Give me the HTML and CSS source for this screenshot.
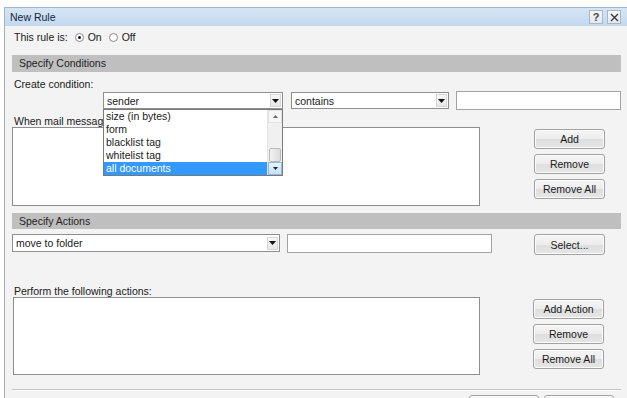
FILE: index.html
```html
<!DOCTYPE html>
<html>
<head>
<meta charset="utf-8">
<title>New Rule</title>
<link rel="stylesheet" href="styles.css">
</head>
<body>
<div class="window">
  <div class="titlebar">
    <span class="title">New Rule</span>
    <div class="tbtns">
      <span class="tbtn help">?</span>
      <span class="tbtn close"><svg width="9" height="9" viewBox="0 0 9 9"><path d="M1 1 L8 8 M8 1 L1 8" stroke="#3a3a3a" stroke-width="1.4"/></svg></span>
    </div>
  </div>
  <div class="body">
    <div class="content">
      <div class="rule-row">
        <span>This rule is:</span>
        <span class="radio checked"></span><span>On</span>
        <span class="radio"></span><span>Off</span>
      </div>

      <div class="section">Specify Conditions</div>
      <div class="label create">Create condition:</div>

      <div class="cond-row">
        <div class="select sender">
          <span class="val">sender</span>
          <span class="arrow"><svg width="7" height="4" viewBox="0 0 7 4"><path d="M0 0 H7 L3.5 4 Z" fill="#111"/></svg></span>
          <div class="droplist">
            <div class="items">
              <div class="item">size (in bytes)</div>
              <div class="item">form</div>
              <div class="item">blacklist tag</div>
              <div class="item">whitelist tag</div>
              <div class="item sel">all documents</div>
            </div>
            <div class="scroll">
              <span class="sb-btn up"><svg width="5" height="3" viewBox="0 0 5 3"><path d="M0 3 L2.5 0 L5 3 Z" fill="#666"/></svg></span>
              <span class="sb-track"><span class="sb-thumb"></span></span>
              <span class="sb-btn down"><svg width="5" height="3" viewBox="0 0 5 3"><path d="M0 0 H5 L2.5 3 Z" fill="#222"/></svg></span>
            </div>
          </div>
        </div>
        <div class="select contains">
          <span class="val">contains</span>
          <span class="arrow"><svg width="7" height="4" viewBox="0 0 7 4"><path d="M0 0 H7 L3.5 4 Z" fill="#111"/></svg></span>
        </div>
        <div class="input cond-input"></div>
      </div>

      <div class="label when">When mail message matches all of these conditions:</div>
      <div class="list-row cond-list">
        <div class="listbox"></div>
        <div class="btn-col">
          <button class="btn">Add</button>
          <button class="btn">Remove</button>
          <button class="btn">Remove All</button>
        </div>
      </div>

      <div class="section actions">Specify Actions</div>
      <div class="action-row">
        <div class="select folder">
          <span class="val">move to folder</span>
          <span class="arrow"><svg width="7" height="4" viewBox="0 0 7 4"><path d="M0 0 H7 L3.5 4 Z" fill="#111"/></svg></span>
        </div>
        <div class="input act-input"></div>
        <button class="btn select-btn">Select...</button>
      </div>

      <div class="label perform">Perform the following actions:</div>
      <div class="list-row act-list">
        <div class="listbox"></div>
        <div class="btn-col">
          <button class="btn">Add Action</button>
          <button class="btn">Remove</button>
          <button class="btn">Remove All</button>
        </div>
      </div>

      <div class="separator"></div>
      <div class="bottom-row">
        <button class="btn wide"></button>
        <button class="btn wide"></button>
      </div>
    </div>
    <div class="frame-right"></div>
  </div>
</div>
</body>
</html>
```

FILE: styles.css
```css
html, body {
  margin: 0;
  padding: 0;
  background: #ffffff;
  overflow: hidden;
}
body {
  font-family: "Liberation Sans", Arial, sans-serif;
  font-size: 10.5px;
  color: #1a1a1a;
}
.window {
  margin: 7px 0 0 4px;
  width: 623px;
  height: 391px;
  display: flex;
  flex-direction: column;
  overflow: hidden;
}
.titlebar {
  height: 18px;
  flex: none;
  border-top: 1px solid #9fb6cf;
  border-left: 1px solid #9fb6cf;
  background: linear-gradient(#d6e5f4, #c3d8ee);
  display: flex;
  align-items: center;
  justify-content: space-between;
  padding-left: 5px;
  padding-right: 6px;
}
.title {
  font-size: 10.5px;
  color: #15263c;
}
.tbtns {
  display: flex;
  gap: 4px;
}
.tbtn {
  width: 12px;
  height: 12px;
  border: 1px solid #a9b6c4;
  background: linear-gradient(#f7f9fc, #e2e8ef);
  display: flex;
  align-items: center;
  justify-content: center;
  font-size: 11px;
  font-weight: bold;
  color: #444;
  line-height: 1;
}
.body {
  flex: 1;
  display: flex;
}
.content {
  flex: 1;
  background: #f3f3f3;
  border-left: 1px solid #a7adb5;
  padding: 4px 8px 0 7px;
  display: flex;
  flex-direction: column;
}
.frame-right {
  width: 6px;
  border-left: 1px solid #9a9ea4;
  background: #dde7f1;
}
.rule-row {
  height: 14px;
  display: flex;
  align-items: center;
  padding-left: 2px;
  gap: 4px;
}
.radio {
  width: 9px;
  height: 9px;
  border: 1px solid #8a8a8a;
  border-radius: 50%;
  background: #fff;
  margin-left: 3px;
  box-sizing: border-box;
  position: relative;
}
.radio.checked::after {
  content: "";
  position: absolute;
  left: 2px;
  top: 2px;
  width: 3px;
  height: 3px;
  border-radius: 50%;
  background: #111;
}
.section {
  margin-top: 11px;
  height: 17px;
  background: #bfbfbf;
  padding-left: 7px;
  line-height: 17px;
  color: #222;
}
.section.actions {
  margin-top: 7px;
  height: 16px;
  line-height: 16px;
}
.label {
  height: 12px;
  line-height: 12px;
  padding-left: 2px;
  white-space: nowrap;
}
.label.create { margin-top: 6px; }
.label.when {
  margin-top: 5px;
  width: 89px;
  overflow: hidden;
}
.label.perform { margin-top: 30px; }

.cond-row {
  margin-top: 1px;
  height: 19px;
  display: flex;
  align-items: flex-start;
  gap: 8px;
  padding-left: 91px;
}
.select {
  position: relative;
  height: 17px;
  box-sizing: border-box;
  border: 1px solid #8f8f8f;
  background: #fff;
  display: flex;
  align-items: center;
  justify-content: space-between;
  padding-left: 3px;
  padding-right: 1px;
}
.select.sender { width: 180px; margin-top: 1px; }
.select.contains { width: 158px; margin-top: 1px; }
.arrow {
  width: 11px;
  height: 13px;
  box-sizing: border-box;
  border: 1px solid #d7d7d7;
  background: linear-gradient(#f8f8f8, #e6e6e6);
  display: flex;
  align-items: center;
  justify-content: center;
}
.input {
  height: 19px;
  box-sizing: border-box;
  border: 1px solid #a3a3a3;
  background: #fff;
}
.cond-input {
  width: 165px;
  margin-left: -1px;
}
.droplist {
  position: absolute;
  left: -1px;
  top: 16px;
  width: 180px;
  height: 67px;
  box-sizing: border-box;
  border: 1px solid #7a7a7a;
  background: #fff;
  display: flex;
  z-index: 5;
}
.items {
  flex: 1;
}
.item {
  height: 13px;
  line-height: 13px;
  padding-left: 2px;
  white-space: nowrap;
}
.item.sel {
  background: #3399ff;
  color: #fff;
}
.scroll {
  width: 14px;
  display: flex;
  flex-direction: column;
  background: #f0f0f0;
  border-left: 1px solid #e4e4e4;
}
.sb-btn {
  height: 13px;
  display: flex;
  align-items: center;
  justify-content: center;
  box-sizing: border-box;
  border: 1px solid #e2e2e2;
  background: #f6f6f6;
}
.sb-btn.down {
  border-color: #8fb8e2;
  background: linear-gradient(#e8f3fd, #c6e0f8);
}
.sb-track {
  flex: 1;
  display: flex;
  flex-direction: column;
  justify-content: flex-end;
}
.sb-thumb {
  height: 14px;
  margin: 0 1px;
  box-sizing: border-box;
  border: 1px solid #b9b9b9;
  border-radius: 2px;
  background: linear-gradient(90deg, #f2f2f2, #dcdcdc);
}

.list-row {
  display: grid;
  grid-template-columns: 468px 71px;
  column-gap: 54px;
}
.listbox {
  box-sizing: border-box;
  border: 1px solid #8e8e8e;
  background: #fff;
}
.cond-list .listbox { height: 79px; }
.act-list .listbox { height: 78px; margin-left: 1px; }
.btn-col {
  display: flex;
  flex-direction: column;
  gap: 5px;
  padding-top: 2px;
}
.act-list .btn-col { margin-left: -1px; }
.btn {
  font-family: "Liberation Sans", Arial, sans-serif;
  font-size: 10.5px;
  color: #1a1a1a;
  height: 20px;
  width: 71px;
  padding: 0;
  box-sizing: border-box;
  border: 1px solid #a2a2a2;
  border-radius: 3px;
  background: linear-gradient(#f6f6f6 0%, #ececec 50%, #dedede 51%, #e6e6e6 100%);
  box-shadow: inset 0 0 0 1px #fbfbfb;
}
.action-row {
  margin-top: 5px;
  height: 21px;
  display: flex;
  align-items: flex-start;
}
.select.folder {
  width: 268px;
  height: 18px;
}
.act-input {
  width: 205px;
  margin-left: 7px;
}
.select-btn {
  margin-left: 42px;
  height: 21px;
}
.separator {
  margin-top: 14px;
  height: 1px;
  background: #c4c4c4;
  border-bottom: 1px solid #fbfbfb;
}
.bottom-row {
  margin-top: 4px;
  display: flex;
  justify-content: flex-end;
  gap: 5px;
  padding-right: 7px;
}
.btn.wide {
  width: 70px;
  height: 22px;
}
```
